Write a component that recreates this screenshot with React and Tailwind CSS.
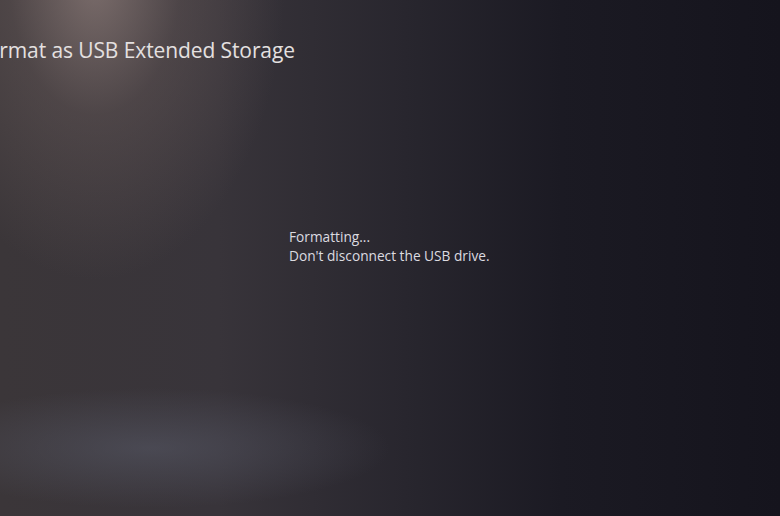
export default function App() {
  return (
    <div className="relative h-[516px] w-[780px] overflow-hidden bg-[#1b1a22] font-['Open_Sans',sans-serif] text-[#e4e0e0]">
      {/* backdrop: warm spotlight top-left, cool haze bottom-left, dark right */}
      <div className="absolute inset-0 bg-[linear-gradient(90deg,#3b3639_0%,#38343a_28%,#28262e_52%,#1b1a23_72%,#15141d_100%)]" />
      <div className="absolute inset-0 bg-[radial-gradient(ellipse_190px_300px_at_95px_-20px,rgba(150,132,128,0.7),rgba(115,100,98,0.35)_45%,rgba(70,60,62,0)_100%)]" />
      <div className="absolute inset-0 bg-[radial-gradient(ellipse_240px_60px_at_150px_448px,rgba(88,90,104,0.55),rgba(70,72,84,0)_100%)]" />

      <div className="relative flex h-full flex-col">
        <h1 className="mt-[36px] ml-[-24px] whitespace-nowrap text-[21px] font-normal leading-[28px] tracking-[-0.1px]">
          Format as USB Extended Storage
        </h1>
        <div className="mt-[163px] ml-[289px] text-[13.7px] leading-[19px] text-[#dcdbe0]">
          <p>Formatting...</p>
          <p>Don't disconnect the USB drive.</p>
        </div>
      </div>
    </div>
  );
}
